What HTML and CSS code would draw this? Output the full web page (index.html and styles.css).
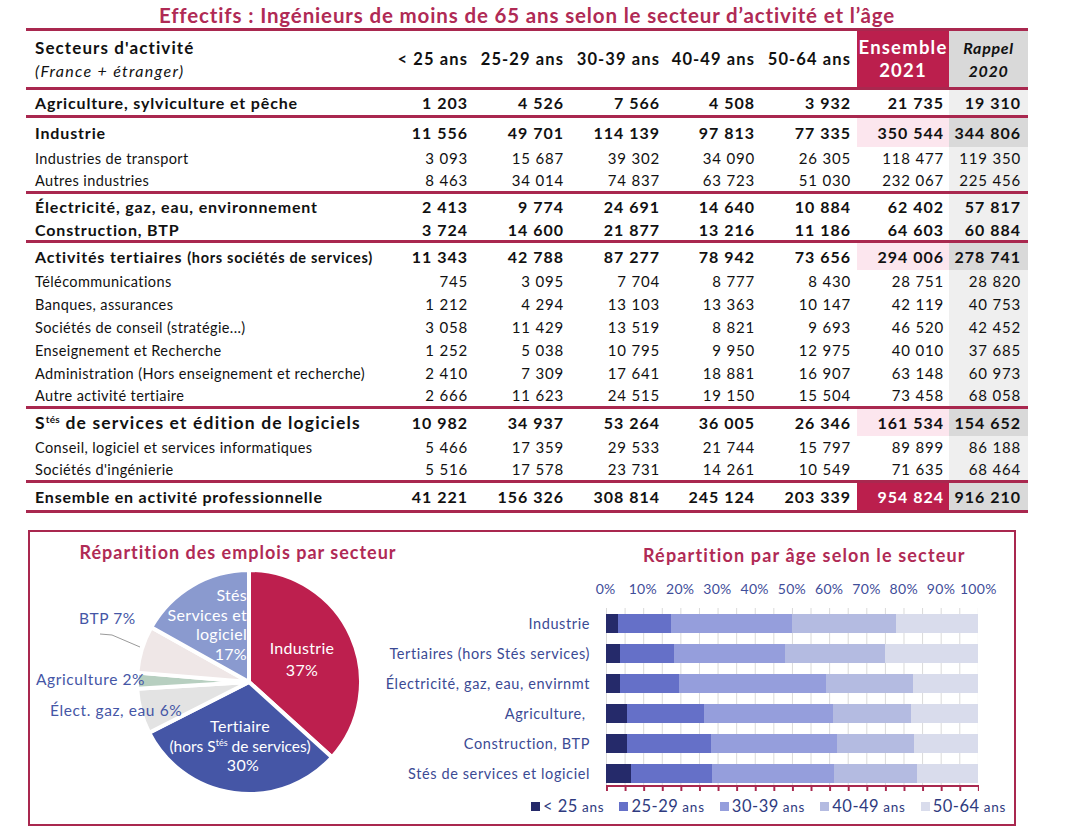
FILE: index.html
```html
<!DOCTYPE html>
<html lang="fr">
<head>
<meta charset="utf-8">
<title>Effectifs ingénieurs</title>
<link rel="stylesheet" href="styles.css">
</head>
<body>
<div class="page">
  <h1 class="title">Effectifs : Ingénieurs de moins de 65 ans selon le secteur d’activité et l’âge</h1>
  <table class="tbl">
    <colgroup>
      <col class="c-label"><col class="c-a1"><col class="c-a2"><col class="c-a3"><col class="c-a4"><col class="c-a5"><col class="c-ens"><col class="c-rap">
    </colgroup>
    <thead>
      <tr class="head">
        <th class="lbl"><span class="h-main">Secteurs d'activité</span><span class="h-sub">(France + étranger)</span></th>
        <th class="num">&lt; 25 ans</th>
        <th class="num">25-29 ans</th>
        <th class="num">30-39 ans</th>
        <th class="num">40-49 ans</th>
        <th class="num">50-64 ans</th>
        <th class="ens-h">Ensemble<br>2021</th>
        <th class="rap-h">Rappel<br>2020</th>
      </tr>
    </thead>
    <tbody>
      <tr class="grp sep r-agri"><td class="lbl">Agriculture, sylviculture et pêche</td><td>1 203</td><td>4 526</td><td>7 566</td><td>4 508</td><td>3 932</td><td class="ens">21 735</td><td class="rap">19 310</td></tr>
      <tr class="grp sep hl r-tall"><td class="lbl">Industrie</td><td>11 556</td><td>49 701</td><td>114 139</td><td>97 813</td><td>77 335</td><td class="ens">350 544</td><td class="rap">344 806</td></tr>
      <tr class="sub"><td class="lbl">Industries de transport</td><td>3 093</td><td>15 687</td><td>39 302</td><td>34 090</td><td>26 305</td><td class="ens">118 477</td><td class="rap">119 350</td></tr>
      <tr class="sub"><td class="lbl">Autres industries</td><td>8 463</td><td>34 014</td><td>74 837</td><td>63 723</td><td>51 030</td><td class="ens">232 067</td><td class="rap">225 456</td></tr>
      <tr class="grp sep r-elec"><td class="lbl">Électricité, gaz, eau, environnement</td><td>2 413</td><td>9 774</td><td>24 691</td><td>14 640</td><td>10 884</td><td class="ens">62 402</td><td class="rap">57 817</td></tr>
      <tr class="grp"><td class="lbl">Construction, BTP</td><td>3 724</td><td>14 600</td><td>21 877</td><td>13 216</td><td>11 186</td><td class="ens">64 603</td><td class="rap">60 884</td></tr>
      <tr class="grp sep hl r-mid"><td class="lbl">Activités tertiaires <span class="small-b">(hors sociétés de services)</span></td><td>11 343</td><td>42 788</td><td>87 277</td><td>78 942</td><td>73 656</td><td class="ens">294 006</td><td class="rap">278 741</td></tr>
      <tr class="sub"><td class="lbl">Télécommunications</td><td>745</td><td>3 095</td><td>7 704</td><td>8 777</td><td>8 430</td><td class="ens">28 751</td><td class="rap">28 820</td></tr>
      <tr class="sub"><td class="lbl">Banques, assurances</td><td>1 212</td><td>4 294</td><td>13 103</td><td>13 363</td><td>10 147</td><td class="ens">42 119</td><td class="rap">40 753</td></tr>
      <tr class="sub"><td class="lbl">Sociétés de conseil (stratégie...)</td><td>3 058</td><td>11 429</td><td>13 519</td><td>8 821</td><td>9 693</td><td class="ens">46 520</td><td class="rap">42 452</td></tr>
      <tr class="sub"><td class="lbl">Enseignement et Recherche</td><td>1 252</td><td>5 038</td><td>10 795</td><td>9 950</td><td>12 975</td><td class="ens">40 010</td><td class="rap">37 685</td></tr>
      <tr class="sub"><td class="lbl">Administration (Hors enseignement et recherche)</td><td>2 410</td><td>7 309</td><td>17 641</td><td>18 881</td><td>16 907</td><td class="ens">63 148</td><td class="rap">60 973</td></tr>
      <tr class="sub"><td class="lbl">Autre activité tertiaire</td><td>2 666</td><td>11 623</td><td>24 515</td><td>19 150</td><td>15 504</td><td class="ens">73 458</td><td class="rap">68 058</td></tr>
      <tr class="grp sep hl r-mid big"><td class="lbl">S<sup>tés</sup> de services et édition de logiciels</td><td>10 982</td><td>34 937</td><td>53 264</td><td>36 005</td><td>26 346</td><td class="ens">161 534</td><td class="rap">154 652</td></tr>
      <tr class="sub"><td class="lbl">Conseil, logiciel et services informatiques</td><td>5 466</td><td>17 359</td><td>29 533</td><td>21 744</td><td>15 797</td><td class="ens">89 899</td><td class="rap">86 188</td></tr>
      <tr class="sub"><td class="lbl">Sociétés d'ingénierie</td><td>5 516</td><td>17 578</td><td>23 731</td><td>14 261</td><td>10 549</td><td class="ens">71 635</td><td class="rap">68 464</td></tr>
      <tr class="grp sep total r-tall"><td class="lbl">Ensemble en activité professionnelle</td><td>41 221</td><td>156 326</td><td>308 814</td><td>245 124</td><td>203 339</td><td class="ens">954 824</td><td class="rap">916 210</td></tr>
    </tbody>
  </table>

  <section class="charts">
    <div class="pie-panel">
      <h2 class="chart-title pie-title">Répartition des emplois par secteur</h2>
      <svg class="pie" width="392" height="259" viewBox="0 0 392 259">
        <g stroke="#fff" stroke-width="4" stroke-linejoin="round">
          <path fill="#bd1f4e" d="M219 117 L219 5 A112 112 0 0 1 301.97 192.23 Z"/>
          <path fill="#4556a6" d="M219 117 L301.97 192.23 A112 112 0 0 1 119.12 167.67 Z"/>
          <path fill="#e3e3e3" d="M219 117 L119.12 167.67 A112 112 0 0 1 107.2 123.64 Z"/>
          <path fill="#b7cfc0" d="M219 117 L107.2 123.64 A112 112 0 0 1 107.39 107.63 Z"/>
          <path fill="#efe7e7" d="M219 117 L107.39 107.63 A112 112 0 0 1 121.24 62.36 Z"/>
          <path fill="#8a9acf" d="M219 117 L121.24 62.36 A112 112 0 0 1 219 5 Z"/>
        </g>
        <polyline class="leader" points="70,69 82,70 110,82"/>
        <g class="pl-in">
          <text x="272" y="89">Industrie</text>
          <text x="272" y="111">37%</text>
          <text x="210" y="167">Tertiaire</text>
          <text class="tight" x="210" y="187">(hors S<tspan class="sup" dy="-6">tés</tspan><tspan dy="6"> de services)</tspan></text>
          <text x="213" y="206">30%</text>
        </g>
        <g class="pl-in pl-end">
          <text x="217" y="36">Stés</text>
          <text x="217" y="56">Services et</text>
          <text x="217" y="75">logiciel</text>
          <text x="217" y="95">17%</text>
        </g>
        <g class="pl-out">
          <text x="49" y="59">BTP 7%</text>
          <text x="6" y="120">Agriculture 2%</text>
          <text x="20" y="151">Élect. gaz, eau 6%</text>
        </g>
      </svg>
    </div>
    <div class="bar-panel">
      <h2 class="chart-title bar-title">Répartition par âge selon le secteur</h2>
      <div class="axis-labels">
        <span>0%</span><span>10%</span><span>20%</span><span>30%</span><span>40%</span><span>50%</span><span>60%</span><span>70%</span><span>80%</span><span>90%</span><span>100%</span>
      </div>
      <div class="chart">
        <div class="labels">
          <span>Industrie</span>
          <span>Tertiaires (hors Stés services)</span>
          <span>Électricité, gaz, eau, envirnmt</span>
          <span>Agriculture,&nbsp;</span>
          <span>Construction, BTP</span>
          <span>Stés de services et logiciel</span>
        </div>
        <div class="plot-wrap">
          <div class="plot">
            <div class="bar"><i class="s1" style="width:3.30%"></i><i class="s2" style="width:14.18%"></i><i class="s3" style="width:32.56%"></i><i class="s4" style="width:27.90%"></i><i class="s5" style="width:22.06%"></i></div>
            <div class="bar"><i class="s1" style="width:3.86%"></i><i class="s2" style="width:14.55%"></i><i class="s3" style="width:29.69%"></i><i class="s4" style="width:26.85%"></i><i class="s5" style="width:25.05%"></i></div>
            <div class="bar"><i class="s1" style="width:3.87%"></i><i class="s2" style="width:15.66%"></i><i class="s3" style="width:39.57%"></i><i class="s4" style="width:23.46%"></i><i class="s5" style="width:17.44%"></i></div>
            <div class="bar"><i class="s1" style="width:5.53%"></i><i class="s2" style="width:20.82%"></i><i class="s3" style="width:34.81%"></i><i class="s4" style="width:20.74%"></i><i class="s5" style="width:18.10%"></i></div>
            <div class="bar"><i class="s1" style="width:5.76%"></i><i class="s2" style="width:22.60%"></i><i class="s3" style="width:33.86%"></i><i class="s4" style="width:20.46%"></i><i class="s5" style="width:17.32%"></i></div>
            <div class="bar"><i class="s1" style="width:6.80%"></i><i class="s2" style="width:21.63%"></i><i class="s3" style="width:32.97%"></i><i class="s4" style="width:22.29%"></i><i class="s5" style="width:16.31%"></i></div>
          </div>
          <div class="ticks"></div>
        </div>
      </div>
      <div class="legend">
        <span class="lg"><i class="sw s1"></i>&lt; 25 <small>ans</small></span>
        <span class="lg"><i class="sw s2"></i>25-29 <small>ans</small></span>
        <span class="lg"><i class="sw s3"></i>30-39 <small>ans</small></span>
        <span class="lg"><i class="sw s4"></i>40-49 <small>ans</small></span>
        <span class="lg"><i class="sw s5"></i>50-64 <small>ans</small></span>
      </div>
    </div>
  </section>
</div>
</body>
</html>
```

FILE: styles.css
```css
* { box-sizing: border-box; }
body {
  margin: 0;
  background: #fff;
  color: #111;
  font-family: Lato, "Liberation Sans", sans-serif;
}
.page { width: 1073px; }

.title {
  margin: 0 0 0 26px;
  width: 1002px;
  padding-top: 3px;
  height: 28px;
  line-height: 25px;
  text-align: center;
  font-size: 20.5px;
  font-weight: 700;
  color: #b02a55;
  letter-spacing: 0.85px;
  white-space: nowrap;
}

/* ---------- table ---------- */
.tbl {
  margin-left: 26px;
  width: 1002px;
  border-collapse: collapse;
  table-layout: fixed;
  border-top: 3px solid #a9284f;
  border-bottom: 3px solid #a9284f;
}
.c-label { width: 350px; }
.c-a1 { width: 95px; }
.c-a2 { width: 96px; }
.c-a3 { width: 96px; }
.c-a4 { width: 95px; }
.c-a5 { width: 99px; }
.c-ens { width: 92px; }
.c-rap { width: 79px; }

.tbl th, .tbl td {
  padding: 0 3px 0 0;
  text-align: right;
  white-space: nowrap;
  vertical-align: middle;
}
.tbl td:nth-child(6), .tbl th:nth-child(6) { padding-right: 6px; }
.tbl td.ens { padding-right: 5px; }
.tbl td.rap { padding-right: 7px; background: #efefef; }
.tbl .lbl { text-align: left; padding-left: 9px; }

.head { height: 59px; border-bottom: 3px solid #a9284f; }
.head th { font-size: 16.5px; font-weight: 700; letter-spacing: 1.1px; }
.h-main { display: block; font-size: 17px; font-weight: 700; line-height: 23px; letter-spacing: 1.1px; }
.h-sub { display: block; font-size: 16px; font-weight: 400; font-style: italic; line-height: 23px; letter-spacing: 1.3px; }
.ens-h {
  background: #bb1f4d;
  color: #fff;
  font-size: 18.5px !important;
  line-height: 23px;
  letter-spacing: 1.2px !important;
  text-align: center !important;
  padding: 0 !important;
}
.rap-h {
  background: #d9d9d9;
  font-style: italic;
  font-size: 16px !important;
  letter-spacing: 0.7px !important;
  line-height: 23px;
  text-align: center !important;
  padding: 0 !important;
}

.sep { border-top: 3px solid #a9284f; }
.grp { height: 23px; }
.grp td { font-size: 16px; font-weight: 700; letter-spacing: 1px; }
.grp td.lbl { letter-spacing: 0.85px; }
.r-agri { height: 28px; }
.r-tall { height: 30px; }
.r-mid { height: 28px; }
.r-elec { height: 26px; }
.small-b { font-size: 14.5px; letter-spacing: 0.7px; }
.big td.lbl { font-size: 17.5px; letter-spacing: 1.15px; }
.big sup { font-size: 10px; font-weight: 700; vertical-align: 6px; line-height: 0; letter-spacing: 0.3px; }
.sub { height: 23px; }
.sub td { font-size: 15px; font-weight: 400; letter-spacing: 0.8px; }
.sub td.lbl { font-size: 14.5px; letter-spacing: 0.4px; }
.hl td.ens { background: #fce6ee; }
.hl td.rap { background: #d9d9d9; }
.total td.ens { background: #bb1f4d; color: #fff; }
.total td.rap { background: #d9d9d9; }
.total td.lbl { letter-spacing: 0.8px; }

/* ---------- charts ---------- */
.charts {
  margin: 17px 0 0 28px;
  width: 988px;
  height: 296px;
  border: 2px solid #a9284f;
  display: flex;
}
.chart-title {
  margin: 0;
  font-size: 18px;
  font-weight: 700;
  color: #b02a55;
  line-height: 22px;
  letter-spacing: 1px;
  white-space: nowrap;
}
.pie-panel { width: 392px; flex: none; }
.pie-title { margin-top: 9px; padding-left: 24px; text-align: center; }
.pie { display: block; margin-top: 2px; }
.pie text { font-family: Lato, "Liberation Sans", sans-serif; font-size: 16px; letter-spacing: 0.3px; }
.pie text.tight { letter-spacing: 0; font-size: 15.5px; }
.pl-in text { fill: #fff; text-anchor: middle; }
.pl-in.pl-end text { text-anchor: end; }
.pie .sup { font-size: 9px; }
.pl-out text { fill: #4556a6; font-size: 15.5px; letter-spacing: 0.6px; }
.leader { fill: none; stroke: #9a9a9a; stroke-width: 1; }

.bar-panel { flex: 1; }
.bar-title { margin-top: 12px; padding-left: 221px; letter-spacing: 1.15px; }
.axis-labels {
  display: flex;
  margin: 15px 0 0 165px;
  width: 410px;
}
.axis-labels span {
  flex: 1;
  text-align: center;
  font-size: 14px;
  letter-spacing: 0.3px;
  line-height: 16px;
  color: #3f4e9a;
  white-space: nowrap;
}
.chart {
  display: flex;
  gap: 16px;
  margin-top: 11px;
}
.labels {
  width: 168px;
  flex: none;
  display: flex;
  flex-direction: column;
  gap: 11px;
  padding-top: 6px;
}
.labels span {
  height: 19px;
  line-height: 19px;
  font-size: 14.5px;
  letter-spacing: 0.6px;
  color: #3b4a94;
  white-space: nowrap;
  display: flex;
  justify-content: flex-end;
}
.plot-wrap { width: 372px; flex: none; }
.plot {
  height: 177px;
  padding: 6px 0 2px;
  display: flex;
  flex-direction: column;
  gap: 11px;
  background-image: linear-gradient(to right, #d9d9d9 1px, transparent 1px);
  background-size: 18.6px 100%;
}
.bar { height: 19px; display: flex; }
.bar i { display: block; height: 100%; }
.s1 { background: #252a6a; }
.s2 { background: #6570c8; }
.s3 { background: #959edc; }
.s4 { background: #b4bbe1; }
.s5 { background: #d9dcec; }
.ticks {
  height: 6px;
  border-top: 2px solid #a9284f;
  background-image: linear-gradient(to right, #a9284f 1.5px, transparent 1.5px);
  background-size: 18.6px 100%;
  width: 373px;
}
.legend {
  display: flex;
  gap: 15px;
  margin: 6px 0 0 109px;
  line-height: 18px;
}
.lg {
  display: flex;
  align-items: baseline;
  font-size: 16.5px;
  letter-spacing: 0.5px;
  color: #2f3b80;
  white-space: nowrap;
}
.lg small { font-size: 13.5px; letter-spacing: 0.8px; margin-left: 4px; }
.sw { display: inline-block; width: 9px; height: 9px; margin-right: 3px; align-self: center; }
```
